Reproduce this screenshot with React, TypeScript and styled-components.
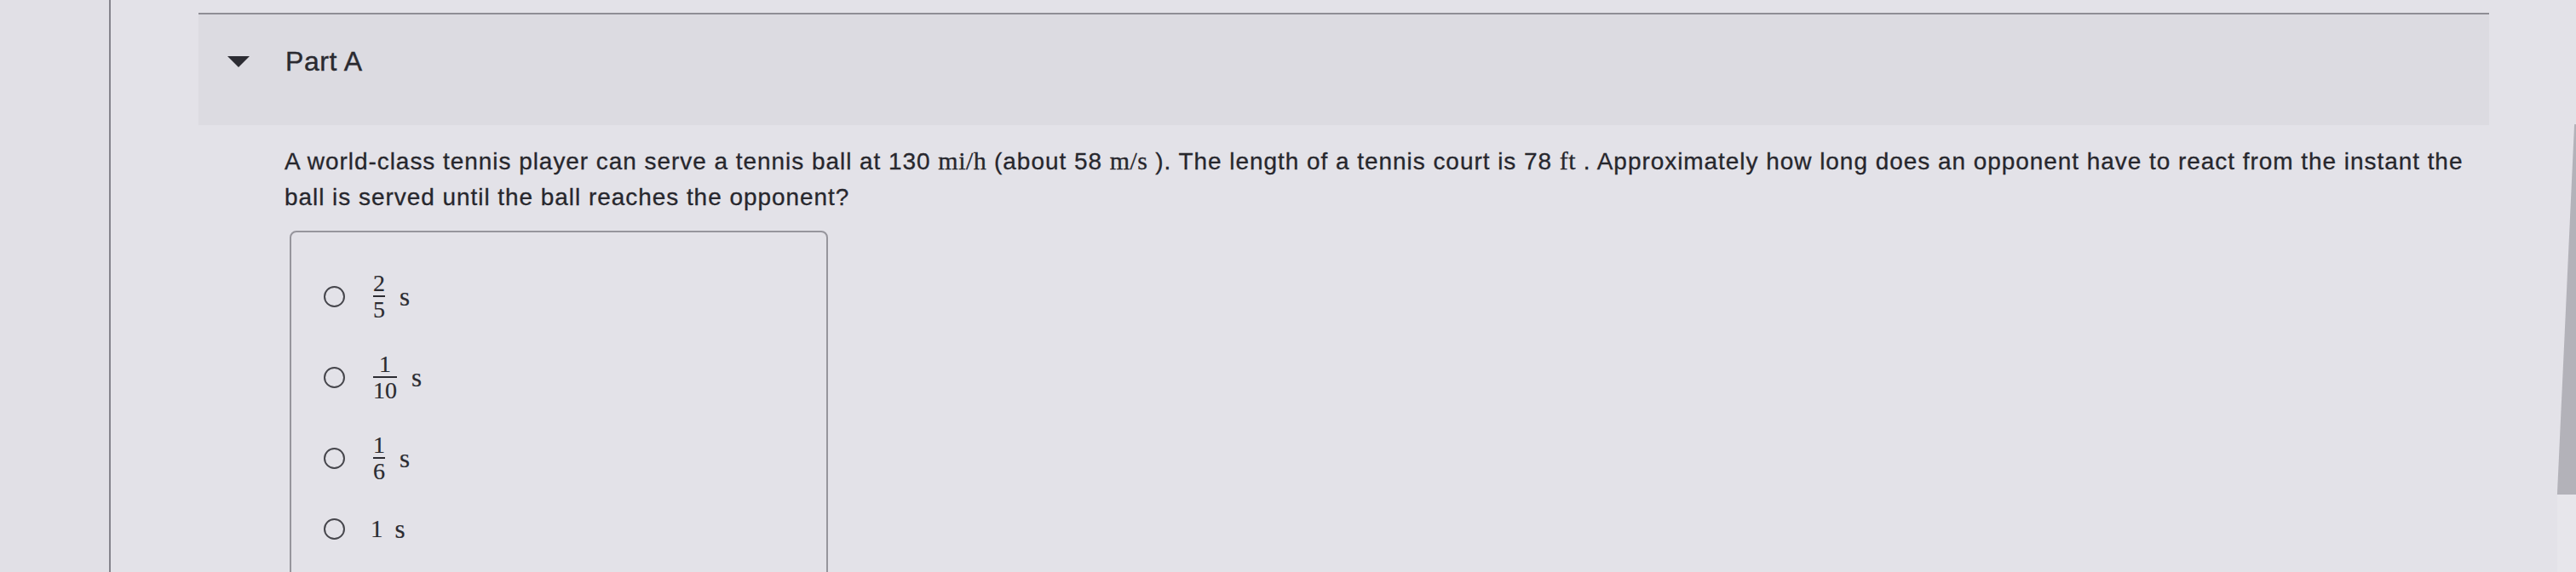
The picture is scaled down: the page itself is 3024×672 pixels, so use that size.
import styled, { createGlobalStyle } from "styled-components";

const GlobalStyle = createGlobalStyle`
  html, body {
    margin: 0;
    padding: 0;
    background: #e3e2e8;
  }
  body {
    width: 3024px;
    height: 672px;
    overflow: hidden;
    font-family: "Liberation Sans", Arial, sans-serif;
    color: #2b2b31;
  }
`;

interface Choice {
  num?: string;
  den?: string;
  plain?: string;
}

const choices: Choice[] = [
  { num: "2", den: "5" },
  { num: "1", den: "10" },
  { num: "1", den: "6" },
  { plain: "1" },
];

export default function App() {
  return (
    <>
      <GlobalStyle />
      <Page>
        <Gutter />
        <Main>
          <PartHeader>
            <Caret width="26" height="13" viewBox="0 0 26 13">
              <polygon points="0,0 26,0 13,13" fill="#2c2c33" />
            </Caret>
            <PartTitle>Part A</PartTitle>
          </PartHeader>
          <PartBody>
            <Question>
              A world-class tennis player can serve a tennis ball at 130{" "}
              <MathUnit>mi/h</MathUnit> (about 58 <MathUnit>m/s</MathUnit> ).
              The length of a tennis court is 78 <MathUnit>ft</MathUnit> .
              Approximately how long does an opponent have to react from the
              instant the ball is served until the ball reaches the opponent?
            </Question>
            <ChoiceBox>
              {choices.map((c, i) => (
                <ChoiceRow key={i} $short={!!c.plain}>
                  <Radio />
                  {c.plain ? (
                    <Plain>{c.plain}</Plain>
                  ) : (
                    <Fraction>
                      <Digit>{c.num}</Digit>
                      <Bar />
                      <Digit>{c.den}</Digit>
                    </Fraction>
                  )}
                  <Unit>s</Unit>
                </ChoiceRow>
              ))}
            </ChoiceBox>
          </PartBody>
        </Main>
        <RightEdge>
          <Bezel />
          <Ledge />
        </RightEdge>
      </Page>
    </>
  );
}

const Page = styled.div`
  display: flex;
  width: 3024px;
  height: 672px;
  overflow: hidden;
`;

const Gutter = styled.div`
  width: 128px;
  flex-shrink: 0;
  background: #e1e0e6;
  border-right: 2px solid #85848c;
`;

const Main = styled.div`
  flex: 1;
  display: flex;
  flex-direction: column;
  padding-left: 103px;
  padding-top: 15px;
  min-width: 0;
`;

const PartHeader = styled.div`
  flex-shrink: 0;
  width: 2689px;
  height: 132px;
  box-sizing: border-box;
  border-top: 2px solid #8f8e95;
  background: #dcdbe1;
  display: flex;
  align-items: center;
  gap: 42px;
  padding: 0 0 20px 34px;
`;

const Caret = styled.svg`
  display: block;
  flex-shrink: 0;
`;

const PartTitle = styled.div`
  font-size: 32px;
  line-height: 32px;
  letter-spacing: 0.6px;
  color: #2a2a30;
  -webkit-text-stroke: 0.4px #2a2a30;
`;

const PartBody = styled.div`
  flex-shrink: 0;
  padding-left: 101px;
  width: 2590px;
`;

const Question = styled.p`
  margin: 21px 0 0;
  font-size: 28px;
  line-height: 42px;
  letter-spacing: 0.95px;
  color: #27272d;
  -webkit-text-stroke: 0.3px #27272d;
`;

const MathUnit = styled.span`
  font-family: "Liberation Serif", "Times New Roman", serif;
  font-size: 30px;
  letter-spacing: 0.5px;
`;

const ChoiceBox = styled.div`
  margin: 18px 0 0 6px;
  width: 632px;
  height: 480px;
  box-sizing: border-box;
  border: 2px solid #96959c;
  border-radius: 8px;
  padding: 46px 0 0 38px;
  display: flex;
  flex-direction: column;
  gap: 36px;
`;

const ChoiceRow = styled.div<{ $short: boolean }>`
  display: flex;
  align-items: center;
  flex-shrink: 0;
  height: ${(p) => (p.$short ? "35px" : "59px")};
  color: #2b2b31;
  -webkit-text-stroke: 0.2px #2b2b31;
`;

const Radio = styled.span`
  width: 25px;
  height: 25px;
  box-sizing: border-box;
  border: 2px solid #46464c;
  border-radius: 50%;
  flex-shrink: 0;
  margin-right: 30px;
`;

const Fraction = styled.span`
  display: inline-flex;
  flex-direction: column;
  align-items: center;
  padding: 0 3px;
  font-family: "Liberation Serif", "Times New Roman", serif;
`;

const Digit = styled.span`
  font-size: 28px;
  line-height: 24px;
`;

const Bar = styled.span`
  align-self: stretch;
  height: 2px;
  margin: 2px 0 3px;
  background: #2b2b31;
`;

const Plain = styled.span`
  font-family: "Liberation Serif", "Times New Roman", serif;
  font-size: 29px;
`;

const Unit = styled.span`
  font-family: "Liberation Serif", "Times New Roman", serif;
  font-size: 31px;
  margin-left: 14px;
`;

const RightEdge = styled.div`
  width: 24px;
  flex-shrink: 0;
  display: flex;
  flex-direction: column;
  padding-top: 146px;
`;

const Bezel = styled.div`
  height: 435px;
  background: #b3b2b9;
  clip-path: polygon(92% 0, 100% 0, 100% 100%, 8% 100%);
`;

const Ledge = styled.div`
  flex: 1;
  background: #e7e6eb;
  margin-left: 2px;
`;
